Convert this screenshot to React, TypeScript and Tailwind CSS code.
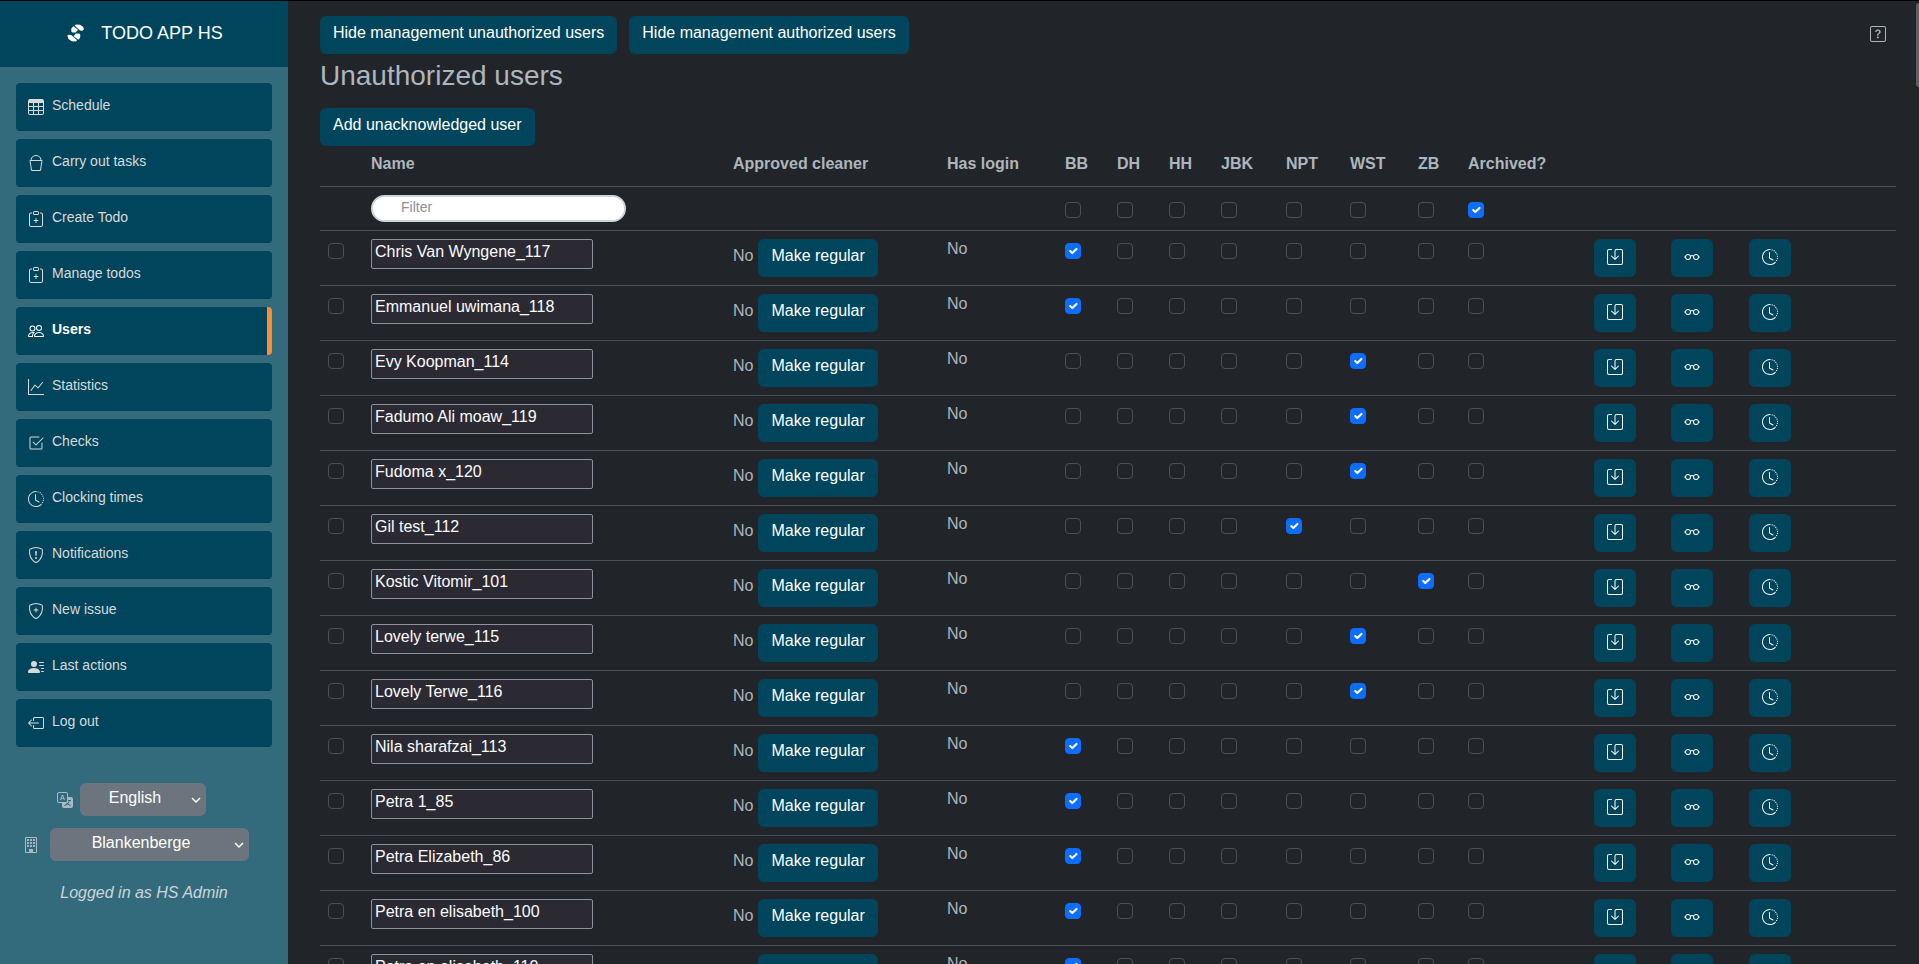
import React from "react";
import {
  BsBoxArrowLeft,
  BsBucket,
  BsBuilding,
  BsCheck2Square,
  BsClipboardPlus,
  BsClockHistory,
  BsEyeglasses,
  BsGraphUp,
  BsPeople,
  BsPersonLinesFill,
  BsQuestionSquare,
  BsSave,
  BsShieldExclamation,
  BsShieldPlus,
  BsTable,
  BsTranslate,
} from "react-icons/bs";
import type { IconType } from "react-icons";

const navItems: { label: string; icon: IconType }[] = [
  { label: "Schedule", icon: BsTable },
  { label: "Carry out tasks", icon: BsBucket },
  { label: "Create Todo", icon: BsClipboardPlus },
  { label: "Manage todos", icon: BsClipboardPlus },
  { label: "Users", icon: BsPeople },
  { label: "Statistics", icon: BsGraphUp },
  { label: "Checks", icon: BsCheck2Square },
  { label: "Clocking times", icon: BsClockHistory },
  { label: "Notifications", icon: BsShieldExclamation },
  { label: "New issue", icon: BsShieldPlus },
  { label: "Last actions", icon: BsPersonLinesFill },
  { label: "Log out", icon: BsBoxArrowLeft },
];

const locations = ["BB", "DH", "HH", "JBK", "NPT", "WST", "ZB"];

const users = [
  { name: "Chris Van Wyngene_117", location: "BB" },
  { name: "Emmanuel uwimana_118", location: "BB" },
  { name: "Evy Koopman_114", location: "WST" },
  { name: "Fadumo Ali moaw_119", location: "WST" },
  { name: "Fudoma x_120", location: "WST" },
  { name: "Gil test_112", location: "NPT" },
  { name: "Kostic Vitomir_101", location: "ZB" },
  { name: "Lovely terwe_115", location: "WST" },
  { name: "Lovely Terwe_116", location: "WST" },
  { name: "Nila sharafzai_113", location: "BB" },
  { name: "Petra 1_85", location: "BB" },
  { name: "Petra Elizabeth_86", location: "BB" },
  { name: "Petra en elisabeth_100", location: "BB" },
  { name: "Petra en elisabeth_110", location: "BB" },
];

function Check({ label, checked = false }: { label: string; checked?: boolean }) {
  return (
    <span className="grid size-4">
      <input
        type="checkbox"
        aria-label={label}
        defaultChecked={checked}
        className="peer col-start-1 row-start-1 size-4 appearance-none rounded border border-[#495057] checked:border-[#0d6efd] checked:bg-[#0d6efd]"
      />
      <svg
        viewBox="0 0 20 20"
        className="pointer-events-none invisible col-start-1 row-start-1 size-4 p-px peer-checked:visible"
        aria-hidden="true"
      >
        <path d="m6 10 3 3 6-6" fill="none" stroke="#fff" strokeWidth="3" strokeLinecap="round" strokeLinejoin="round" />
      </svg>
    </span>
  );
}

function Button({ children }: { children: React.ReactNode }) {
  return (
    <button type="button" className="rounded-md bg-[#00455c] px-[13px] pt-[5px] pb-[9px] leading-6 text-white">
      {children}
    </button>
  );
}

function IconButton({ label, icon: Icon }: { label: string; icon: IconType }) {
  return (
    <button
      type="button"
      aria-label={label}
      className="flex h-[38px] w-[42px] items-center justify-center rounded-md bg-[#00455c] pb-px text-white"
    >
      <Icon className="size-4" />
    </button>
  );
}

function Picker({ label, value, width }: { label: string; value: string; width: string }) {
  return (
    <span className={`grid items-center ${width}`}>
      <select
        aria-label={label}
        className="col-start-1 row-start-1 h-[33px] w-full appearance-none rounded-md bg-[#6c757d] pr-4 pb-1 text-center text-white"
        defaultValue={value}
      >
        <option>{value}</option>
      </select>
      <svg viewBox="0 0 10 10" className="pointer-events-none col-start-1 row-start-1 mr-[5px] size-2.5 justify-self-end" aria-hidden="true">
        <path d="m1 3 4 4 4-4" fill="none" stroke="#fff" strokeWidth="1.5" />
      </svg>
    </span>
  );
}

function Logo() {
  return (
    <svg viewBox="0 0 18 18" className="size-[18px]" fill="#fff" aria-hidden="true">
      <path d="M7.500 1.500 9 .5l4 .3 3 2 1 2.400-1.500 1.500-2.500-.2z" />
      <path d="M6.300 2.300 11 5.800 8.600 8.600H5.400L4.200 7.200l.3-3z" />
      <path d="M8.800 9.400h3.400l1.200 1.500-.4 3.200-1.600 1.600-4.700-3.500z" />
      <path d="M.3 11.600l1.700-.8 2.600.4 5.600 5.100-1.400 1.200-4-.2-3.300-2.200z" />
    </svg>
  );
}

function Sidebar() {
  return (
    <aside className="flex w-72 shrink-0 flex-col bg-[#346b7c]">
      <div className="flex h-[66px] items-center justify-center gap-4 bg-[#00455c] pb-0.5 pl-0.5">
        <Logo />
        <span className="text-lg text-white">TODO APP HS</span>
      </div>
      <nav className="flex flex-col gap-2 p-4">
        {navItems.map(({ label, icon: Icon }) => {
          const active = label === "Users";
          return (
            <a
              key={label}
              href="#"
              aria-current={active ? "page" : undefined}
              className={`flex h-12 items-center gap-2 overflow-hidden rounded px-3 text-sm ${
                active ? "border-r-[5px] border-[#fd8d2e] bg-[#00455c] font-bold text-white" : "bg-[#00455c] text-[#d9d9d9]"
              }`}
            >
              <Icon className="size-4" />
              <span className="pb-1">{label}</span>
            </a>
          );
        })}
      </nav>
      <div className="mt-5 flex flex-col gap-3">
        <div className="flex items-center justify-center gap-[7px] pr-[25px]">
          <BsTranslate className="size-4 text-[#a9bac4]" />
          <Picker label="Language" value="English" width="w-[126px]" />
        </div>
        <div className="flex items-center justify-center gap-[11px] pr-[17px]">
          <BsBuilding className="size-4 text-[#a9bac4]" />
          <Picker label="Location" value="Blankenberge" width="w-[199px]" />
        </div>
      </div>
      <p className="mt-5 text-center text-[#ced4da] italic">Logged in as HS Admin</p>
    </aside>
  );
}

function UserTable() {
  return (
    <table className="w-full table-fixed border-collapse">
      <colgroup>
        <col className="w-[43px]" />
        <col className="w-[362px]" />
        <col className="w-[214px]" />
        <col className="w-[118px]" />
        <col className="w-[52px]" />
        <col className="w-[52px]" />
        <col className="w-[52px]" />
        <col className="w-[65px]" />
        <col className="w-[64px]" />
        <col className="w-[68px]" />
        <col className="w-[50px]" />
        <col className="w-[126px]" />
        <col className="w-[77px]" />
        <col className="w-[78px]" />
        <col className="w-[155px]" />
      </colgroup>
      <thead>
        <tr className="h-10 border-b border-[#495057] text-left align-top">
          <td />
          {["Name", "Approved cleaner", "Has login", ...locations, "Archived?"].map((title) => (
            <th key={title} scope="col" className="px-2 pt-1.5 font-bold">
              {title}
            </th>
          ))}
          <td colSpan={3} />
        </tr>
      </thead>
      <tbody>
        <tr className="h-11 border-b border-[#495057] align-top">
          <td />
          <td className="px-2 pt-2">
            <input
              type="text"
              aria-label="Filter"
              placeholder="Filter"
              className="block h-[27px] w-[255px] rounded-full border-2 border-[#ced4da] bg-white px-7 pb-0.5 text-sm text-black placeholder:text-[#8a8f98]"
            />
          </td>
          <td />
          <td />
          {locations.map((location) => (
            <td key={location} className="px-2 pt-[15px]">
              <Check label={`Filter ${location}`} />
            </td>
          ))}
          <td className="px-2 pt-[15px]">
            <Check label="Filter archived" checked />
          </td>
          <td colSpan={3} />
        </tr>
        {users.map((user) => (
          <tr key={user.name} className="h-[55px] border-b border-[#495057] align-top">
            <td className="px-2 pt-3">
              <Check label={`Select ${user.name}`} />
            </td>
            <td className="px-2 pt-2">
              <input
                type="text"
                aria-label="Name"
                defaultValue={user.name}
                className="block h-[30px] w-[222px] rounded-xs border border-[#8f8f9d] bg-[#2b2a33] px-[3px] pb-1 text-[#fbfbfe]"
              />
            </td>
            <td className="px-2 pt-2">
              <span className="flex items-baseline gap-[5px]">
                No <Button>Make regular</Button>
              </span>
            </td>
            <td className="px-2 pt-1.5">No</td>
            {locations.map((location) => (
              <td key={location} className="px-2 pt-3">
                <Check label={`${user.name} ${location}`} checked={location === user.location} />
              </td>
            ))}
            <td className="px-2 pt-3">
              <Check label={`${user.name} archived`} />
            </td>
            <td className="px-2 pt-2">
              <IconButton label="Save" icon={BsSave} />
            </td>
            <td className="px-2 pt-2">
              <IconButton label="View" icon={BsEyeglasses} />
            </td>
            <td className="px-2 pt-2">
              <IconButton label="History" icon={BsClockHistory} />
            </td>
          </tr>
        ))}
      </tbody>
    </table>
  );
}

export default function App() {
  return (
    <div className="relative flex h-screen overflow-hidden border-t border-black bg-[#212529] font-['Liberation_Sans',Arial,sans-serif] text-base text-[#adb5bd]">
      <Sidebar />
      <main className="min-w-0 flex-1 overflow-hidden pt-[15px] pr-[23px] pl-8">
        <div className="flex items-start gap-3">
          <Button>Hide management unauthorized users</Button>
          <Button>Hide management authorized users</Button>
          <button type="button" aria-label="Help" className="mt-2.5 mr-2.5 ml-auto">
            <BsQuestionSquare className="size-4" />
          </button>
        </div>
        <h1 className="mt-[5px] mb-[15px] text-[28px] leading-[34px]">Unauthorized users</h1>
        <Button>Add unacknowledged user</Button>
        <UserTable />
      </main>
      <div className="absolute top-0.5 right-0 h-[84px] w-[3px] rounded-l-full bg-[#5f5f5f]" />
    </div>
  );
}
